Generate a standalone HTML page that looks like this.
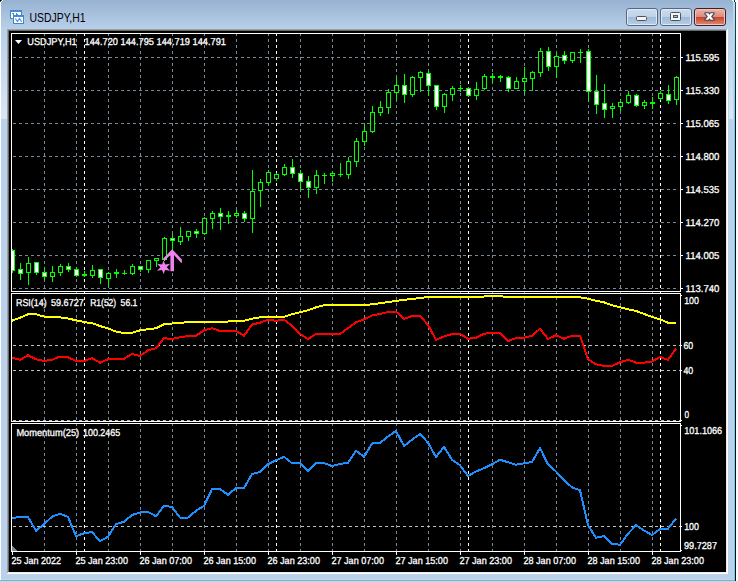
<!DOCTYPE html>
<html><head><meta charset="utf-8"><title>USDJPY,H1</title>
<style>html,body{margin:0;padding:0;background:#b9d1ea;overflow:hidden}svg{display:block}text{font-family:"Liberation Sans",sans-serif;}</style></head><body>
<svg width="738" height="581" viewBox="0 0 738 581">
<defs><linearGradient id="cap" x1="0" y1="0" x2="0" y2="119" gradientUnits="userSpaceOnUse"><stop offset="0" stop-color="#97b2d1"/><stop offset="0.245" stop-color="#b8d0ea"/><stop offset="1" stop-color="#d9e6f5"/></linearGradient><linearGradient id="cy" x1="0" y1="0" x2="0" y2="130" gradientUnits="userSpaceOnUse"><stop offset="0" stop-color="#9ce9ff"/><stop offset="1" stop-color="#4fd8ff"/></linearGradient><linearGradient id="dk" x1="0" y1="0" x2="0" y2="130" gradientUnits="userSpaceOnUse"><stop offset="0" stop-color="#404040"/><stop offset="1" stop-color="#120a0a"/></linearGradient><linearGradient id="btnT" x1="0" y1="0" x2="0" y2="1"><stop offset="0" stop-color="#c9dbee"/><stop offset="1" stop-color="#bdd1e8"/></linearGradient><linearGradient id="btnB" x1="0" y1="0" x2="0" y2="1"><stop offset="0" stop-color="#9fb9d6"/><stop offset="1" stop-color="#b4cbe4"/></linearGradient><linearGradient id="clsT" x1="0" y1="0" x2="0" y2="1"><stop offset="0" stop-color="#e9b1a5"/><stop offset="1" stop-color="#d98a7a"/></linearGradient><linearGradient id="clsB" x1="0" y1="0" x2="0" y2="1"><stop offset="0" stop-color="#c4422a"/><stop offset="1" stop-color="#d9836d"/></linearGradient></defs>
<g shape-rendering="crispEdges">
<rect x="0" y="0" width="738" height="581" fill="#b9d1ea"/>
<rect x="0" y="0" width="728" height="119" fill="url(#cap)"/>
<rect x="728" y="0" width="1" height="30" fill="url(#cap)"/>
<rect x="729" y="0" width="5" height="119" fill="url(#cap)"/>
<rect x="0" y="2" width="1" height="579" fill="#ffffff"/>
<rect x="0" y="0" width="1" height="1" fill="#000"/><rect x="1" y="0" width="1" height="1" fill="#555"/><rect x="0" y="1" width="1" height="1" fill="#555"/>
<rect x="2" y="0" width="1" height="1" fill="#fff"/><rect x="1" y="1" width="1" height="1" fill="#fff"/>
<rect x="733" y="0" width="1" height="581" fill="#c3d3ea"/>
<rect x="734" y="0" width="1" height="581" fill="url(#cy)"/>
<rect x="735" y="0" width="1" height="581" fill="url(#dk)"/>
<rect x="736" y="0" width="2" height="581" fill="#ffffff"/>
<rect x="734" y="0" width="1" height="2" fill="#10303a"/><rect x="735" y="0" width="1" height="2" fill="#ffffff"/>
<rect x="732" y="0" width="2" height="1" fill="#e6f8ff"/><rect x="733" y="1" width="1" height="1" fill="#e6f8ff"/>
<rect x="1" y="579" width="733" height="1" fill="#c3d6ec"/>
<rect x="0" y="580" width="735" height="1" fill="#2fd0f0"/>
<rect x="7" y="29" width="721" height="545" fill="#a0a0a0"/>
<rect x="7" y="573" width="721" height="1" fill="#ffffff"/><rect x="727" y="29" width="1" height="545" fill="#ffffff"/>
<rect x="8" y="30" width="719" height="543" fill="#696969"/>
<rect x="8" y="572" width="719" height="1" fill="#ececec"/><rect x="726" y="30" width="1" height="543" fill="#ececec"/>
<rect x="9" y="31" width="717" height="541" fill="#000000"/>
</g>
<rect x="626.5" y="8.5" width="31" height="17" rx="2.5" ry="2.5" fill="#dfeaf6" stroke="#56677f" stroke-width="1"/>
<rect x="628" y="10" width="28" height="7" fill="url(#btnT)"/>
<rect x="628" y="17" width="28" height="7" fill="url(#btnB)"/>
<rect x="660.5" y="8.5" width="31" height="17" rx="2.5" ry="2.5" fill="#dfeaf6" stroke="#56677f" stroke-width="1"/>
<rect x="662" y="10" width="28" height="7" fill="url(#btnT)"/>
<rect x="662" y="17" width="28" height="7" fill="url(#btnB)"/>
<rect x="694.5" y="8.5" width="31" height="17" rx="2.5" ry="2.5" fill="#f0c4bb" stroke="#4a1a22" stroke-width="1"/>
<rect x="696" y="10" width="28" height="7" fill="url(#clsT)"/>
<rect x="696" y="17" width="28" height="7" fill="url(#clsB)"/>
<rect x="636.5" y="16.5" width="10" height="4" rx="1" fill="#f4f4f0" stroke="#4a5266" stroke-width="1"/>
<rect x="670.5" y="12.5" width="10" height="8" rx="1" fill="#f4f4f0" stroke="#4a5266" stroke-width="1"/>
<rect x="673.5" y="15.5" width="4" height="2" fill="#9fbbdc" stroke="#4a5266" stroke-width="1"/>
<polygon points="705.30,13.30 708.40,13.30 709.50,14.63 710.60,13.30 713.70,13.30 711.05,16.50 713.70,19.70 710.60,19.70 709.50,18.37 708.40,19.70 705.30,19.70 707.95,16.50" fill="#ffffff" stroke="#4a4650" stroke-width="2.2" stroke-linejoin="round"/>
<polygon points="705.30,13.30 708.40,13.30 709.50,14.63 710.60,13.30 713.70,13.30 711.05,16.50 713.70,19.70 710.60,19.70 709.50,18.37 708.40,19.70 705.30,19.70 707.95,16.50" fill="#ffffff"/>
<g shape-rendering="crispEdges">
<rect x="10" y="10" width="12" height="9" fill="#4a86ff"/>
<rect x="11" y="12" width="10" height="6" fill="#fffef2"/>
<rect x="11" y="10" width="1" height="1" fill="#3a8f6a"/>
<rect x="11" y="18" width="1" height="1" fill="#3a8f6a"/>
<rect x="13" y="10" width="1" height="1" fill="#3a8f6a"/>
<rect x="13" y="18" width="1" height="1" fill="#3a8f6a"/>
<rect x="15" y="10" width="1" height="1" fill="#3a8f6a"/>
<rect x="15" y="18" width="1" height="1" fill="#3a8f6a"/>
<rect x="17" y="10" width="1" height="1" fill="#3a8f6a"/>
<rect x="17" y="18" width="1" height="1" fill="#3a8f6a"/>
<rect x="19" y="10" width="1" height="1" fill="#3a8f6a"/>
<rect x="19" y="18" width="1" height="1" fill="#3a8f6a"/>
<rect x="21" y="10" width="1" height="1" fill="#3a8f6a"/>
<rect x="21" y="18" width="1" height="1" fill="#3a8f6a"/>
<rect x="10" y="11" width="1" height="1" fill="#3a8f6a"/>
<rect x="21" y="11" width="1" height="1" fill="#3a8f6a"/>
<rect x="10" y="13" width="1" height="1" fill="#3a8f6a"/>
<rect x="21" y="13" width="1" height="1" fill="#3a8f6a"/>
<rect x="10" y="15" width="1" height="1" fill="#3a8f6a"/>
<rect x="21" y="15" width="1" height="1" fill="#3a8f6a"/>
<rect x="10" y="17" width="1" height="1" fill="#3a8f6a"/>
<rect x="21" y="17" width="1" height="1" fill="#3a8f6a"/>
<rect x="12" y="13" width="2" height="1" fill="#4a86ff"/><rect x="13" y="13" width="1" height="2" fill="#4a86ff"/>
<rect x="16" y="13" width="1" height="2" fill="#4a86ff"/><rect x="17" y="14" width="1" height="1" fill="#4a86ff"/>
<rect x="13" y="15" width="11" height="9" fill="#4a86ff"/>
<rect x="14" y="17" width="9" height="6" fill="#fffef2"/>
<rect x="14" y="15" width="1" height="1" fill="#3a8f6a"/>
<rect x="14" y="23" width="1" height="1" fill="#3a8f6a"/>
<rect x="16" y="15" width="1" height="1" fill="#3a8f6a"/>
<rect x="16" y="23" width="1" height="1" fill="#3a8f6a"/>
<rect x="18" y="15" width="1" height="1" fill="#3a8f6a"/>
<rect x="18" y="23" width="1" height="1" fill="#3a8f6a"/>
<rect x="20" y="15" width="1" height="1" fill="#3a8f6a"/>
<rect x="20" y="23" width="1" height="1" fill="#3a8f6a"/>
<rect x="22" y="15" width="1" height="1" fill="#3a8f6a"/>
<rect x="22" y="23" width="1" height="1" fill="#3a8f6a"/>
<rect x="13" y="16" width="1" height="1" fill="#3a8f6a"/>
<rect x="23" y="16" width="1" height="1" fill="#3a8f6a"/>
<rect x="13" y="18" width="1" height="1" fill="#3a8f6a"/>
<rect x="23" y="18" width="1" height="1" fill="#3a8f6a"/>
<rect x="13" y="20" width="1" height="1" fill="#3a8f6a"/>
<rect x="23" y="20" width="1" height="1" fill="#3a8f6a"/>
<rect x="13" y="22" width="1" height="1" fill="#3a8f6a"/>
<rect x="23" y="22" width="1" height="1" fill="#3a8f6a"/>
</g>
<path d="M15.3,18.5 L17.4,21.6 L19.5,18.5 L21.6,21.6" stroke="#4a86ff" stroke-width="1.1" fill="none"/>
<text x="29.6" y="22" font-size="12.6" fill="#000" textLength="56" lengthAdjust="spacingAndGlyphs">USDJPY,H1</text>
<g shape-rendering="crispEdges">
<line x1="44.5" y1="34" x2="44.5" y2="551" stroke="#778899" stroke-width="1" stroke-dasharray="3 3" stroke-dashoffset="1"/>
<line x1="76.5" y1="34" x2="76.5" y2="551" stroke="#778899" stroke-width="1" stroke-dasharray="3 3" stroke-dashoffset="1"/>
<line x1="108.5" y1="34" x2="108.5" y2="551" stroke="#778899" stroke-width="1" stroke-dasharray="3 3" stroke-dashoffset="1"/>
<line x1="140.5" y1="34" x2="140.5" y2="551" stroke="#778899" stroke-width="1" stroke-dasharray="3 3" stroke-dashoffset="1"/>
<line x1="172.5" y1="34" x2="172.5" y2="551" stroke="#778899" stroke-width="1" stroke-dasharray="3 3" stroke-dashoffset="1"/>
<line x1="204.5" y1="34" x2="204.5" y2="551" stroke="#778899" stroke-width="1" stroke-dasharray="3 3" stroke-dashoffset="1"/>
<line x1="236.5" y1="34" x2="236.5" y2="551" stroke="#778899" stroke-width="1" stroke-dasharray="3 3" stroke-dashoffset="1"/>
<line x1="268.5" y1="34" x2="268.5" y2="551" stroke="#778899" stroke-width="1" stroke-dasharray="3 3" stroke-dashoffset="1"/>
<line x1="300.5" y1="34" x2="300.5" y2="551" stroke="#778899" stroke-width="1" stroke-dasharray="3 3" stroke-dashoffset="1"/>
<line x1="332.5" y1="34" x2="332.5" y2="551" stroke="#778899" stroke-width="1" stroke-dasharray="3 3" stroke-dashoffset="1"/>
<line x1="364.5" y1="34" x2="364.5" y2="551" stroke="#778899" stroke-width="1" stroke-dasharray="3 3" stroke-dashoffset="1"/>
<line x1="396.5" y1="34" x2="396.5" y2="551" stroke="#778899" stroke-width="1" stroke-dasharray="3 3" stroke-dashoffset="1"/>
<line x1="428.5" y1="34" x2="428.5" y2="551" stroke="#778899" stroke-width="1" stroke-dasharray="3 3" stroke-dashoffset="1"/>
<line x1="460.5" y1="34" x2="460.5" y2="551" stroke="#778899" stroke-width="1" stroke-dasharray="3 3" stroke-dashoffset="1"/>
<line x1="492.5" y1="34" x2="492.5" y2="551" stroke="#778899" stroke-width="1" stroke-dasharray="3 3" stroke-dashoffset="1"/>
<line x1="524.5" y1="34" x2="524.5" y2="551" stroke="#778899" stroke-width="1" stroke-dasharray="3 3" stroke-dashoffset="1"/>
<line x1="556.5" y1="34" x2="556.5" y2="551" stroke="#778899" stroke-width="1" stroke-dasharray="3 3" stroke-dashoffset="1"/>
<line x1="588.5" y1="34" x2="588.5" y2="551" stroke="#778899" stroke-width="1" stroke-dasharray="3 3" stroke-dashoffset="1"/>
<line x1="620.5" y1="34" x2="620.5" y2="551" stroke="#778899" stroke-width="1" stroke-dasharray="3 3" stroke-dashoffset="1"/>
<line x1="652.5" y1="34" x2="652.5" y2="551" stroke="#778899" stroke-width="1" stroke-dasharray="3 3" stroke-dashoffset="1"/>
<line x1="12" y1="57.5" x2="679" y2="57.5" stroke="#778899" stroke-width="1" stroke-dasharray="3 3" stroke-dashoffset="5"/>
<line x1="12" y1="90.5" x2="679" y2="90.5" stroke="#778899" stroke-width="1" stroke-dasharray="3 3" stroke-dashoffset="5"/>
<line x1="12" y1="123.5" x2="679" y2="123.5" stroke="#778899" stroke-width="1" stroke-dasharray="3 3" stroke-dashoffset="5"/>
<line x1="12" y1="156.5" x2="679" y2="156.5" stroke="#778899" stroke-width="1" stroke-dasharray="3 3" stroke-dashoffset="5"/>
<line x1="12" y1="189.5" x2="679" y2="189.5" stroke="#778899" stroke-width="1" stroke-dasharray="3 3" stroke-dashoffset="5"/>
<line x1="12" y1="222.5" x2="679" y2="222.5" stroke="#778899" stroke-width="1" stroke-dasharray="3 3" stroke-dashoffset="5"/>
<line x1="12" y1="255.5" x2="679" y2="255.5" stroke="#778899" stroke-width="1" stroke-dasharray="3 3" stroke-dashoffset="5"/>
<line x1="12" y1="288.5" x2="679" y2="288.5" stroke="#778899" stroke-width="1" stroke-dasharray="3 3" stroke-dashoffset="5"/>
<line x1="84.5" y1="34" x2="84.5" y2="551" stroke="#ffffff" stroke-width="1" stroke-dasharray="3 3" stroke-dashoffset="1"/>
<line x1="276.5" y1="34" x2="276.5" y2="551" stroke="#ffffff" stroke-width="1" stroke-dasharray="3 3" stroke-dashoffset="1"/>
<line x1="468.5" y1="34" x2="468.5" y2="551" stroke="#ffffff" stroke-width="1" stroke-dasharray="3 3" stroke-dashoffset="1"/>
<line x1="660.5" y1="34" x2="660.5" y2="551" stroke="#ffffff" stroke-width="1" stroke-dasharray="3 3" stroke-dashoffset="1"/>
<line x1="12" y1="345.5" x2="680" y2="345.5" stroke="#c0c0c0" stroke-width="1" stroke-dasharray="3 3" stroke-dashoffset="5"/>
<line x1="12" y1="370.5" x2="680" y2="370.5" stroke="#c0c0c0" stroke-width="1" stroke-dasharray="3 3" stroke-dashoffset="5"/>
<line x1="12" y1="420.5" x2="680" y2="420.5" stroke="#c0c0c0" stroke-width="1" stroke-dasharray="3 3" stroke-dashoffset="5"/>
<line x1="12" y1="526.5" x2="680" y2="526.5" stroke="#c0c0c0" stroke-width="1" stroke-dasharray="3 3" stroke-dashoffset="5"/>
<rect x="11.5" y="33.5" width="669" height="258" fill="none" stroke="#ffffff" stroke-width="1"/>
<rect x="11.5" y="293.5" width="669" height="128" fill="none" stroke="#ffffff" stroke-width="1"/>
<rect x="11.5" y="423.5" width="669" height="128" fill="none" stroke="#ffffff" stroke-width="1"/>
<rect x="681" y="57" width="2" height="1" fill="#fff"/>
<rect x="681" y="90" width="2" height="1" fill="#fff"/>
<rect x="681" y="123" width="2" height="1" fill="#fff"/>
<rect x="681" y="156" width="2" height="1" fill="#fff"/>
<rect x="681" y="189" width="2" height="1" fill="#fff"/>
<rect x="681" y="222" width="2" height="1" fill="#fff"/>
<rect x="681" y="255" width="2" height="1" fill="#fff"/>
<rect x="681" y="288" width="2" height="1" fill="#fff"/>
<rect x="681" y="295" width="1" height="1" fill="#fff"/>
<rect x="681" y="345" width="1" height="1" fill="#fff"/>
<rect x="681" y="370" width="1" height="1" fill="#fff"/>
<rect x="681" y="420" width="1" height="1" fill="#fff"/>
<rect x="681" y="425" width="1" height="1" fill="#fff"/>
<rect x="681" y="526" width="1" height="1" fill="#fff"/>
<rect x="681" y="550" width="1" height="1" fill="#fff"/>
<rect x="12" y="552" width="1" height="3" fill="#fff"/>
<rect x="76" y="552" width="1" height="3" fill="#fff"/>
<rect x="140" y="552" width="1" height="3" fill="#fff"/>
<rect x="204" y="552" width="1" height="3" fill="#fff"/>
<rect x="268" y="552" width="1" height="3" fill="#fff"/>
<rect x="332" y="552" width="1" height="3" fill="#fff"/>
<rect x="396" y="552" width="1" height="3" fill="#fff"/>
<rect x="460" y="552" width="1" height="3" fill="#fff"/>
<rect x="524" y="552" width="1" height="3" fill="#fff"/>
<rect x="588" y="552" width="1" height="3" fill="#fff"/>
<rect x="652" y="552" width="1" height="3" fill="#fff"/>
<polygon points="12,546 12,551 17,551" fill="#778899"/>
<polygon points="15,40 22,40 18.5,44" fill="#fff" shape-rendering="geometricPrecision"/>
<clipPath id="cm"><rect x="12" y="34" width="668" height="257"/></clipPath>
<g clip-path="url(#cm)">
<rect x="12" y="249" width="1" height="24" fill="#00ff00"/>
<rect x="10" y="250" width="5" height="21" fill="#00ff00"/>
<rect x="11" y="251" width="3" height="19" fill="#ffffff"/>
<rect x="20" y="263" width="1" height="17" fill="#00ff00"/>
<rect x="18" y="269" width="5" height="5" fill="#00ff00"/>
<rect x="19" y="270" width="3" height="3" fill="#ffffff"/>
<rect x="28" y="257" width="1" height="28" fill="#00ff00"/>
<rect x="26" y="263" width="5" height="10" fill="#00ff00"/>
<rect x="27" y="264" width="3" height="8" fill="#000000"/>
<rect x="36" y="262" width="1" height="13" fill="#00ff00"/>
<rect x="34" y="262" width="5" height="11" fill="#00ff00"/>
<rect x="35" y="263" width="3" height="9" fill="#ffffff"/>
<rect x="44" y="267" width="1" height="13" fill="#00ff00"/>
<rect x="42" y="272" width="5" height="5" fill="#00ff00"/>
<rect x="43" y="273" width="3" height="3" fill="#ffffff"/>
<rect x="52" y="266" width="1" height="16" fill="#00ff00"/>
<rect x="50" y="272" width="5" height="5" fill="#00ff00"/>
<rect x="51" y="273" width="3" height="3" fill="#000000"/>
<rect x="60" y="264" width="1" height="12" fill="#00ff00"/>
<rect x="58" y="266" width="5" height="7" fill="#00ff00"/>
<rect x="59" y="267" width="3" height="5" fill="#000000"/>
<rect x="68" y="263" width="1" height="9" fill="#00ff00"/>
<rect x="66" y="266" width="5" height="4" fill="#00ff00"/>
<rect x="67" y="267" width="3" height="2" fill="#ffffff"/>
<rect x="76" y="267" width="1" height="10" fill="#00ff00"/>
<rect x="74" y="269" width="5" height="7" fill="#00ff00"/>
<rect x="75" y="270" width="3" height="5" fill="#ffffff"/>
<rect x="84" y="271" width="1" height="6" fill="#00ff00"/>
<rect x="82" y="274" width="5" height="2" fill="#00ff00"/>
<rect x="92" y="265" width="1" height="13" fill="#00ff00"/>
<rect x="90" y="270" width="5" height="6" fill="#00ff00"/>
<rect x="91" y="271" width="3" height="4" fill="#000000"/>
<rect x="100" y="269" width="1" height="15" fill="#00ff00"/>
<rect x="98" y="269" width="5" height="9" fill="#00ff00"/>
<rect x="99" y="270" width="3" height="7" fill="#ffffff"/>
<rect x="108" y="272" width="1" height="15" fill="#00ff00"/>
<rect x="106" y="273" width="5" height="6" fill="#00ff00"/>
<rect x="107" y="274" width="3" height="4" fill="#000000"/>
<rect x="116" y="269" width="1" height="9" fill="#00ff00"/>
<rect x="114" y="272" width="5" height="2" fill="#00ff00"/>
<rect x="124" y="270" width="1" height="5" fill="#00ff00"/>
<rect x="122" y="273" width="5" height="1" fill="#00ff00"/>
<rect x="132" y="264" width="1" height="11" fill="#00ff00"/>
<rect x="130" y="266" width="5" height="8" fill="#00ff00"/>
<rect x="131" y="267" width="3" height="6" fill="#000000"/>
<rect x="140" y="266" width="1" height="6" fill="#00ff00"/>
<rect x="138" y="266" width="5" height="4" fill="#00ff00"/>
<rect x="139" y="267" width="3" height="2" fill="#ffffff"/>
<rect x="148" y="260" width="1" height="13" fill="#00ff00"/>
<rect x="146" y="260" width="5" height="10" fill="#00ff00"/>
<rect x="147" y="261" width="3" height="8" fill="#000000"/>
<rect x="156" y="258" width="1" height="9" fill="#00ff00"/>
<rect x="154" y="258" width="5" height="3" fill="#00ff00"/>
<rect x="155" y="259" width="3" height="1" fill="#000000"/>
<rect x="164" y="237" width="1" height="24" fill="#00ff00"/>
<rect x="162" y="238" width="5" height="22" fill="#00ff00"/>
<rect x="163" y="239" width="3" height="20" fill="#000000"/>
<rect x="172" y="234" width="1" height="16" fill="#00ff00"/>
<rect x="170" y="238" width="5" height="3" fill="#00ff00"/>
<rect x="171" y="239" width="3" height="1" fill="#ffffff"/>
<rect x="180" y="227" width="1" height="18" fill="#00ff00"/>
<rect x="178" y="236" width="5" height="6" fill="#00ff00"/>
<rect x="179" y="237" width="3" height="4" fill="#000000"/>
<rect x="188" y="231" width="1" height="10" fill="#00ff00"/>
<rect x="186" y="231" width="5" height="6" fill="#00ff00"/>
<rect x="187" y="232" width="3" height="4" fill="#000000"/>
<rect x="196" y="229" width="1" height="9" fill="#00ff00"/>
<rect x="194" y="231" width="5" height="3" fill="#00ff00"/>
<rect x="195" y="232" width="3" height="1" fill="#ffffff"/>
<rect x="204" y="217" width="1" height="18" fill="#00ff00"/>
<rect x="202" y="218" width="5" height="16" fill="#00ff00"/>
<rect x="203" y="219" width="3" height="14" fill="#000000"/>
<rect x="212" y="211" width="1" height="18" fill="#00ff00"/>
<rect x="210" y="213" width="5" height="6" fill="#00ff00"/>
<rect x="211" y="214" width="3" height="4" fill="#000000"/>
<rect x="220" y="208" width="1" height="22" fill="#00ff00"/>
<rect x="218" y="213" width="5" height="4" fill="#00ff00"/>
<rect x="219" y="214" width="3" height="2" fill="#ffffff"/>
<rect x="228" y="211" width="1" height="13" fill="#00ff00"/>
<rect x="226" y="215" width="5" height="2" fill="#00ff00"/>
<rect x="236" y="210" width="1" height="8" fill="#00ff00"/>
<rect x="234" y="213" width="5" height="3" fill="#00ff00"/>
<rect x="235" y="214" width="3" height="1" fill="#000000"/>
<rect x="244" y="211" width="1" height="11" fill="#00ff00"/>
<rect x="242" y="213" width="5" height="6" fill="#00ff00"/>
<rect x="243" y="214" width="3" height="4" fill="#ffffff"/>
<rect x="252" y="170" width="1" height="63" fill="#00ff00"/>
<rect x="250" y="191" width="5" height="28" fill="#00ff00"/>
<rect x="251" y="192" width="3" height="26" fill="#000000"/>
<rect x="260" y="179" width="1" height="28" fill="#00ff00"/>
<rect x="258" y="182" width="5" height="9" fill="#00ff00"/>
<rect x="259" y="183" width="3" height="7" fill="#000000"/>
<rect x="268" y="170" width="1" height="16" fill="#00ff00"/>
<rect x="266" y="172" width="5" height="11" fill="#00ff00"/>
<rect x="267" y="173" width="3" height="9" fill="#000000"/>
<rect x="276" y="173" width="1" height="8" fill="#00ff00"/>
<rect x="274" y="174" width="5" height="5" fill="#00ff00"/>
<rect x="275" y="175" width="3" height="3" fill="#000000"/>
<rect x="284" y="164" width="1" height="12" fill="#00ff00"/>
<rect x="282" y="167" width="5" height="8" fill="#00ff00"/>
<rect x="283" y="168" width="3" height="6" fill="#000000"/>
<rect x="292" y="159" width="1" height="19" fill="#00ff00"/>
<rect x="290" y="167" width="5" height="7" fill="#00ff00"/>
<rect x="291" y="168" width="3" height="5" fill="#ffffff"/>
<rect x="300" y="170" width="1" height="20" fill="#00ff00"/>
<rect x="298" y="173" width="5" height="9" fill="#00ff00"/>
<rect x="299" y="174" width="3" height="7" fill="#ffffff"/>
<rect x="308" y="176" width="1" height="22" fill="#00ff00"/>
<rect x="306" y="181" width="5" height="7" fill="#00ff00"/>
<rect x="307" y="182" width="3" height="5" fill="#ffffff"/>
<rect x="316" y="170" width="1" height="24" fill="#00ff00"/>
<rect x="314" y="175" width="5" height="13" fill="#00ff00"/>
<rect x="315" y="176" width="3" height="11" fill="#000000"/>
<rect x="324" y="173" width="1" height="11" fill="#00ff00"/>
<rect x="322" y="175" width="5" height="1" fill="#00ff00"/>
<rect x="332" y="172" width="1" height="10" fill="#00ff00"/>
<rect x="330" y="173" width="5" height="3" fill="#00ff00"/>
<rect x="331" y="174" width="3" height="1" fill="#000000"/>
<rect x="340" y="163" width="1" height="14" fill="#00ff00"/>
<rect x="338" y="174" width="5" height="1" fill="#00ff00"/>
<rect x="348" y="157" width="1" height="22" fill="#00ff00"/>
<rect x="346" y="161" width="5" height="14" fill="#00ff00"/>
<rect x="347" y="162" width="3" height="12" fill="#000000"/>
<rect x="356" y="138" width="1" height="29" fill="#00ff00"/>
<rect x="354" y="141" width="5" height="21" fill="#00ff00"/>
<rect x="355" y="142" width="3" height="19" fill="#000000"/>
<rect x="364" y="124" width="1" height="22" fill="#00ff00"/>
<rect x="362" y="131" width="5" height="11" fill="#00ff00"/>
<rect x="363" y="132" width="3" height="9" fill="#000000"/>
<rect x="372" y="106" width="1" height="27" fill="#00ff00"/>
<rect x="370" y="112" width="5" height="20" fill="#00ff00"/>
<rect x="371" y="113" width="3" height="18" fill="#000000"/>
<rect x="380" y="101" width="1" height="15" fill="#00ff00"/>
<rect x="378" y="107" width="5" height="6" fill="#00ff00"/>
<rect x="379" y="108" width="3" height="4" fill="#000000"/>
<rect x="388" y="89" width="1" height="25" fill="#00ff00"/>
<rect x="386" y="92" width="5" height="16" fill="#00ff00"/>
<rect x="387" y="93" width="3" height="14" fill="#000000"/>
<rect x="396" y="77" width="1" height="23" fill="#00ff00"/>
<rect x="394" y="85" width="5" height="8" fill="#00ff00"/>
<rect x="395" y="86" width="3" height="6" fill="#000000"/>
<rect x="404" y="74" width="1" height="29" fill="#00ff00"/>
<rect x="402" y="85" width="5" height="10" fill="#00ff00"/>
<rect x="403" y="86" width="3" height="8" fill="#ffffff"/>
<rect x="412" y="76" width="1" height="21" fill="#00ff00"/>
<rect x="410" y="77" width="5" height="18" fill="#00ff00"/>
<rect x="411" y="78" width="3" height="16" fill="#000000"/>
<rect x="420" y="71" width="1" height="21" fill="#00ff00"/>
<rect x="418" y="72" width="5" height="6" fill="#00ff00"/>
<rect x="419" y="73" width="3" height="4" fill="#000000"/>
<rect x="428" y="71" width="1" height="25" fill="#00ff00"/>
<rect x="426" y="73" width="5" height="13" fill="#00ff00"/>
<rect x="427" y="74" width="3" height="11" fill="#ffffff"/>
<rect x="436" y="85" width="1" height="25" fill="#00ff00"/>
<rect x="434" y="85" width="5" height="22" fill="#00ff00"/>
<rect x="435" y="86" width="3" height="20" fill="#ffffff"/>
<rect x="444" y="93" width="1" height="20" fill="#00ff00"/>
<rect x="442" y="94" width="5" height="13" fill="#00ff00"/>
<rect x="443" y="95" width="3" height="11" fill="#000000"/>
<rect x="452" y="86" width="1" height="15" fill="#00ff00"/>
<rect x="450" y="88" width="5" height="7" fill="#00ff00"/>
<rect x="451" y="89" width="3" height="5" fill="#000000"/>
<rect x="460" y="85" width="1" height="7" fill="#00ff00"/>
<rect x="458" y="88" width="5" height="1" fill="#00ff00"/>
<rect x="468" y="87" width="1" height="10" fill="#00ff00"/>
<rect x="466" y="88" width="5" height="8" fill="#00ff00"/>
<rect x="467" y="89" width="3" height="6" fill="#ffffff"/>
<rect x="476" y="82" width="1" height="18" fill="#00ff00"/>
<rect x="474" y="89" width="5" height="7" fill="#00ff00"/>
<rect x="475" y="90" width="3" height="5" fill="#000000"/>
<rect x="484" y="74" width="1" height="16" fill="#00ff00"/>
<rect x="482" y="76" width="5" height="13" fill="#00ff00"/>
<rect x="483" y="77" width="3" height="11" fill="#000000"/>
<rect x="492" y="73" width="1" height="10" fill="#00ff00"/>
<rect x="490" y="76" width="5" height="2" fill="#00ff00"/>
<rect x="500" y="75" width="1" height="7" fill="#00ff00"/>
<rect x="498" y="76" width="5" height="2" fill="#00ff00"/>
<rect x="508" y="76" width="1" height="16" fill="#00ff00"/>
<rect x="506" y="77" width="5" height="12" fill="#00ff00"/>
<rect x="507" y="78" width="3" height="10" fill="#ffffff"/>
<rect x="516" y="77" width="1" height="12" fill="#00ff00"/>
<rect x="514" y="81" width="5" height="8" fill="#00ff00"/>
<rect x="515" y="82" width="3" height="6" fill="#000000"/>
<rect x="524" y="67" width="1" height="27" fill="#00ff00"/>
<rect x="522" y="78" width="5" height="4" fill="#00ff00"/>
<rect x="523" y="79" width="3" height="2" fill="#000000"/>
<rect x="532" y="71" width="1" height="20" fill="#00ff00"/>
<rect x="530" y="72" width="5" height="7" fill="#00ff00"/>
<rect x="531" y="73" width="3" height="5" fill="#000000"/>
<rect x="540" y="48" width="1" height="29" fill="#00ff00"/>
<rect x="538" y="51" width="5" height="22" fill="#00ff00"/>
<rect x="539" y="52" width="3" height="20" fill="#000000"/>
<rect x="548" y="47" width="1" height="24" fill="#00ff00"/>
<rect x="546" y="51" width="5" height="16" fill="#00ff00"/>
<rect x="547" y="52" width="3" height="14" fill="#ffffff"/>
<rect x="556" y="53" width="1" height="25" fill="#00ff00"/>
<rect x="554" y="56" width="5" height="11" fill="#00ff00"/>
<rect x="555" y="57" width="3" height="9" fill="#000000"/>
<rect x="564" y="51" width="1" height="13" fill="#00ff00"/>
<rect x="562" y="55" width="5" height="6" fill="#00ff00"/>
<rect x="563" y="56" width="3" height="4" fill="#ffffff"/>
<rect x="572" y="52" width="1" height="11" fill="#00ff00"/>
<rect x="570" y="52" width="5" height="9" fill="#00ff00"/>
<rect x="571" y="53" width="3" height="7" fill="#000000"/>
<rect x="580" y="49" width="1" height="14" fill="#00ff00"/>
<rect x="578" y="52" width="5" height="1" fill="#00ff00"/>
<rect x="588" y="49" width="1" height="53" fill="#00ff00"/>
<rect x="586" y="51" width="5" height="41" fill="#00ff00"/>
<rect x="587" y="52" width="3" height="39" fill="#ffffff"/>
<rect x="596" y="75" width="1" height="39" fill="#00ff00"/>
<rect x="594" y="91" width="5" height="14" fill="#00ff00"/>
<rect x="595" y="92" width="3" height="12" fill="#ffffff"/>
<rect x="604" y="84" width="1" height="34" fill="#00ff00"/>
<rect x="602" y="103" width="5" height="7" fill="#00ff00"/>
<rect x="603" y="104" width="3" height="5" fill="#ffffff"/>
<rect x="612" y="103" width="1" height="15" fill="#00ff00"/>
<rect x="610" y="106" width="5" height="3" fill="#00ff00"/>
<rect x="611" y="107" width="3" height="1" fill="#000000"/>
<rect x="620" y="99" width="1" height="12" fill="#00ff00"/>
<rect x="618" y="102" width="5" height="5" fill="#00ff00"/>
<rect x="619" y="103" width="3" height="3" fill="#000000"/>
<rect x="628" y="91" width="1" height="13" fill="#00ff00"/>
<rect x="626" y="95" width="5" height="8" fill="#00ff00"/>
<rect x="627" y="96" width="3" height="6" fill="#000000"/>
<rect x="636" y="94" width="1" height="13" fill="#00ff00"/>
<rect x="634" y="95" width="5" height="11" fill="#00ff00"/>
<rect x="635" y="96" width="3" height="9" fill="#ffffff"/>
<rect x="644" y="100" width="1" height="9" fill="#00ff00"/>
<rect x="642" y="102" width="5" height="4" fill="#00ff00"/>
<rect x="643" y="103" width="3" height="2" fill="#000000"/>
<rect x="652" y="97" width="1" height="12" fill="#00ff00"/>
<rect x="650" y="102" width="5" height="2" fill="#00ff00"/>
<rect x="660" y="91" width="1" height="9" fill="#00ff00"/>
<rect x="658" y="93" width="5" height="6" fill="#00ff00"/>
<rect x="659" y="94" width="3" height="4" fill="#000000"/>
<rect x="668" y="85" width="1" height="19" fill="#00ff00"/>
<rect x="666" y="94" width="5" height="7" fill="#00ff00"/>
<rect x="667" y="95" width="3" height="5" fill="#ffffff"/>
<rect x="676" y="76" width="1" height="29" fill="#00ff00"/>
<rect x="674" y="77" width="5" height="23" fill="#00ff00"/>
<rect x="675" y="78" width="3" height="21" fill="#000000"/>
</g>
<polyline points="12,320.7 20,317.7 28,314.3 36,314.3 44,316.5 52,316.8 60,317.3 68,318.5 76,320.3 84,322 92,323.2 100,326 108,328.5 116,331.5 124,333.2 132,332.9 140,330.3 148,329.3 156,328.2 164,324.3 172,323.5 180,322.7 188,322.3 196,321.8 204,321.8 212,321.8 220,321.8 228,321.5 236,320.7 244,320.7 252,318.7 260,317.3 268,316.8 276,316.8 284,316.8 292,314.3 300,312.3 308,310.3 316,307.3 324,305.3 332,305.2 340,305.2 348,305.2 356,305.2 364,305 372,304.3 380,303.2 388,302 396,301 404,299.8 412,299 420,298 428,297 436,296.8 444,296.8 452,296.5 460,296.5 468,296.8 476,296.8 484,296.5 492,296 500,296.3 508,296.8 516,296.8 524,296.8 532,296.8 540,296.8 548,296.8 556,296.8 564,296.8 572,296.8 580,297.3 588,298.7 596,300.7 604,302.3 612,305.3 620,307.3 628,309.3 636,311 644,314 652,317 660,319.3 668,322.7 676,323" fill="none" stroke="#ffff00" stroke-width="2" stroke-linejoin="round"/>
<polyline points="12,357.7 20,359.8 28,355.3 36,359.3 44,361 52,359.8 60,356.5 68,357.3 76,361 84,361 92,358.2 100,362.7 108,359.3 116,358.7 124,358.7 132,354 140,356 148,350.3 156,348.2 164,338.2 172,339 180,337.3 188,336 196,335.7 204,330.3 212,328.2 220,331 228,331 236,331 244,335.7 252,324.5 260,322.7 268,319.8 276,320.7 284,319.8 292,325.7 300,334 308,339 316,334 324,334 332,334 340,334 348,328.2 356,322.3 364,319.3 372,315.5 380,314 388,312 396,311.5 404,319 412,316 420,316 428,324.8 436,339.8 444,336.5 452,334 460,334 468,338.7 476,337.7 484,333.7 492,332.7 500,332.7 508,341 516,338.2 524,337.7 532,335.7 540,328.7 548,339 556,335.3 564,338.7 572,335.7 580,335.7 588,359.3 596,364.3 604,366 612,366 620,362.3 628,359.8 636,362.7 644,362.7 652,361.5 660,357 668,359.8 676,348.7" fill="none" stroke="#ff0000" stroke-width="2" stroke-linejoin="round"/>
<polyline points="12,518 20,517 28,517 36,530.8 44,524.2 52,516.7 60,513.7 68,517 76,536.2 84,533.3 92,532 100,541.2 108,536.7 116,524.2 124,521.7 132,515 140,512.5 148,512 156,516.2 164,505.8 172,507 180,517.5 188,517.5 196,510.8 204,505.8 212,489.2 220,489.2 228,494.7 236,488 244,488 252,474 260,472 268,464.3 276,460.3 284,456.8 292,463.2 300,463.2 308,471.2 316,463.2 324,463.2 332,466 340,464 348,462.7 356,450.7 364,456.8 372,443.5 380,442.8 388,436.5 396,431 404,446 412,439.8 420,434 428,442.7 436,457 444,446.8 452,459.8 460,465.3 468,476 476,471.5 484,468.2 492,464.3 500,459.7 508,462.3 516,464.7 524,463.4 532,461.9 540,448.2 548,464.3 556,471.4 564,480.4 572,487.3 580,490.2 588,525.2 596,537.7 604,536 612,544 620,544.7 628,533.7 636,525.3 644,530.5 652,535 660,529.2 668,528.7 676,518.7" fill="none" stroke="#1e90ff" stroke-width="2" stroke-linejoin="round"/>
</g>
<path d="M172.2,249.2 L181.9,259.5 L181.9,262.8 L181,262.8 L174,254.9 L174,271.2 L170.4,271.2 L170.4,255.1 L164.3,261 L163.1,258.6 Z" fill="#ee82ee"/>
<polygon points="163.60,260.45 165.15,264.57 170.18,263.85 166.70,267.25 170.18,270.65 165.15,269.93 163.60,274.05 162.05,269.93 157.02,270.65 160.50,267.25 157.02,263.85 162.05,264.57" fill="#ee82ee"/>
<text x="27.3" y="45" font-size="10" fill="#fff" stroke="#fff" stroke-width="0.3" style="text-rendering:geometricPrecision" textLength="49.4" lengthAdjust="spacingAndGlyphs">USDJPY,H1</text>
<text x="84.6" y="45" font-size="10" fill="#fff" stroke="#fff" stroke-width="0.3" style="text-rendering:geometricPrecision" textLength="33.4" lengthAdjust="spacingAndGlyphs">144.720</text>
<text x="120.6" y="45" font-size="10" fill="#fff" stroke="#fff" stroke-width="0.3" style="text-rendering:geometricPrecision" textLength="33.4" lengthAdjust="spacingAndGlyphs">144.795</text>
<text x="156.6" y="45" font-size="10" fill="#fff" stroke="#fff" stroke-width="0.3" style="text-rendering:geometricPrecision" textLength="33.4" lengthAdjust="spacingAndGlyphs">144.719</text>
<text x="192.6" y="45" font-size="10" fill="#fff" stroke="#fff" stroke-width="0.3" style="text-rendering:geometricPrecision" textLength="33.4" lengthAdjust="spacingAndGlyphs">144.791</text>
<text x="685.6" y="61" font-size="10" fill="#fff" stroke="#fff" stroke-width="0.3" style="text-rendering:geometricPrecision" textLength="33.8" lengthAdjust="spacingAndGlyphs">115.595</text>
<text x="685.6" y="94" font-size="10" fill="#fff" stroke="#fff" stroke-width="0.3" style="text-rendering:geometricPrecision" textLength="33.8" lengthAdjust="spacingAndGlyphs">115.330</text>
<text x="685.6" y="127" font-size="10" fill="#fff" stroke="#fff" stroke-width="0.3" style="text-rendering:geometricPrecision" textLength="33.8" lengthAdjust="spacingAndGlyphs">115.065</text>
<text x="685.6" y="160" font-size="10" fill="#fff" stroke="#fff" stroke-width="0.3" style="text-rendering:geometricPrecision" textLength="33.8" lengthAdjust="spacingAndGlyphs">114.800</text>
<text x="685.6" y="193" font-size="10" fill="#fff" stroke="#fff" stroke-width="0.3" style="text-rendering:geometricPrecision" textLength="33.8" lengthAdjust="spacingAndGlyphs">114.535</text>
<text x="685.6" y="226" font-size="10" fill="#fff" stroke="#fff" stroke-width="0.3" style="text-rendering:geometricPrecision" textLength="33.8" lengthAdjust="spacingAndGlyphs">114.270</text>
<text x="685.6" y="259" font-size="10" fill="#fff" stroke="#fff" stroke-width="0.3" style="text-rendering:geometricPrecision" textLength="33.8" lengthAdjust="spacingAndGlyphs">114.005</text>
<text x="685.6" y="292" font-size="10" fill="#fff" stroke="#fff" stroke-width="0.3" style="text-rendering:geometricPrecision" textLength="33.8" lengthAdjust="spacingAndGlyphs">113.740</text>
<text x="16.0" y="306" font-size="10" fill="#fff" stroke="#fff" stroke-width="0.3" style="text-rendering:geometricPrecision" textLength="30.6" lengthAdjust="spacingAndGlyphs">RSI(14)</text>
<text x="51.0" y="306" font-size="10" fill="#fff" stroke="#fff" stroke-width="0.3" style="text-rendering:geometricPrecision" textLength="32.8" lengthAdjust="spacingAndGlyphs">59.6727</text>
<text x="90.2" y="306" font-size="10" fill="#fff" stroke="#fff" stroke-width="0.3" style="text-rendering:geometricPrecision" textLength="26" lengthAdjust="spacingAndGlyphs">R1(52)</text>
<text x="120.6" y="306" font-size="10" fill="#fff" stroke="#fff" stroke-width="0.3" style="text-rendering:geometricPrecision" textLength="16.8" lengthAdjust="spacingAndGlyphs">56.1</text>
<text x="684.2" y="304" font-size="10" fill="#fff" stroke="#fff" stroke-width="0.3" style="text-rendering:geometricPrecision" textLength="14.8" lengthAdjust="spacingAndGlyphs">100</text>
<text x="683.4" y="349" font-size="10" fill="#fff" stroke="#fff" stroke-width="0.3" style="text-rendering:geometricPrecision" textLength="9.8" lengthAdjust="spacingAndGlyphs">60</text>
<text x="683.4" y="374" font-size="10" fill="#fff" stroke="#fff" stroke-width="0.3" style="text-rendering:geometricPrecision" textLength="9.8" lengthAdjust="spacingAndGlyphs">40</text>
<text x="684.4" y="418" font-size="10" fill="#fff" stroke="#fff" stroke-width="0.3" style="text-rendering:geometricPrecision" textLength="4.6" lengthAdjust="spacingAndGlyphs">0</text>
<text x="16.4" y="436" font-size="10" fill="#fff" stroke="#fff" stroke-width="0.3" style="text-rendering:geometricPrecision" textLength="62.8" lengthAdjust="spacingAndGlyphs">Momentum(25)</text>
<text x="83.0" y="436" font-size="10" fill="#fff" stroke="#fff" stroke-width="0.3" style="text-rendering:geometricPrecision" textLength="37.2" lengthAdjust="spacingAndGlyphs">100.2465</text>
<text x="684.2" y="434" font-size="10" fill="#fff" stroke="#fff" stroke-width="0.3" style="text-rendering:geometricPrecision" textLength="38" lengthAdjust="spacingAndGlyphs">101.1066</text>
<text x="684.2" y="530" font-size="10" fill="#fff" stroke="#fff" stroke-width="0.3" style="text-rendering:geometricPrecision" textLength="14.8" lengthAdjust="spacingAndGlyphs">100</text>
<text x="684.0" y="549" font-size="10" fill="#fff" stroke="#fff" stroke-width="0.3" style="text-rendering:geometricPrecision" textLength="33" lengthAdjust="spacingAndGlyphs">99.7287</text>
<text x="11.4" y="564" font-size="10" fill="#fff" stroke="#fff" stroke-width="0.3" style="text-rendering:geometricPrecision" textLength="49.6" lengthAdjust="spacingAndGlyphs">25 Jan 2022</text>
<text x="75.4" y="564" font-size="10" fill="#fff" stroke="#fff" stroke-width="0.3" style="text-rendering:geometricPrecision" textLength="52.6" lengthAdjust="spacingAndGlyphs">25 Jan 23:00</text>
<text x="139.4" y="564" font-size="10" fill="#fff" stroke="#fff" stroke-width="0.3" style="text-rendering:geometricPrecision" textLength="52.6" lengthAdjust="spacingAndGlyphs">26 Jan 07:00</text>
<text x="203.4" y="564" font-size="10" fill="#fff" stroke="#fff" stroke-width="0.3" style="text-rendering:geometricPrecision" textLength="52.6" lengthAdjust="spacingAndGlyphs">26 Jan 15:00</text>
<text x="267.4" y="564" font-size="10" fill="#fff" stroke="#fff" stroke-width="0.3" style="text-rendering:geometricPrecision" textLength="52.6" lengthAdjust="spacingAndGlyphs">26 Jan 23:00</text>
<text x="331.4" y="564" font-size="10" fill="#fff" stroke="#fff" stroke-width="0.3" style="text-rendering:geometricPrecision" textLength="52.6" lengthAdjust="spacingAndGlyphs">27 Jan 07:00</text>
<text x="395.4" y="564" font-size="10" fill="#fff" stroke="#fff" stroke-width="0.3" style="text-rendering:geometricPrecision" textLength="52.6" lengthAdjust="spacingAndGlyphs">27 Jan 15:00</text>
<text x="459.4" y="564" font-size="10" fill="#fff" stroke="#fff" stroke-width="0.3" style="text-rendering:geometricPrecision" textLength="52.6" lengthAdjust="spacingAndGlyphs">27 Jan 23:00</text>
<text x="523.4" y="564" font-size="10" fill="#fff" stroke="#fff" stroke-width="0.3" style="text-rendering:geometricPrecision" textLength="52.6" lengthAdjust="spacingAndGlyphs">28 Jan 07:00</text>
<text x="587.4" y="564" font-size="10" fill="#fff" stroke="#fff" stroke-width="0.3" style="text-rendering:geometricPrecision" textLength="52.6" lengthAdjust="spacingAndGlyphs">28 Jan 15:00</text>
<text x="651.4" y="564" font-size="10" fill="#fff" stroke="#fff" stroke-width="0.3" style="text-rendering:geometricPrecision" textLength="52.6" lengthAdjust="spacingAndGlyphs">28 Jan 23:00</text>
</svg></body></html>
